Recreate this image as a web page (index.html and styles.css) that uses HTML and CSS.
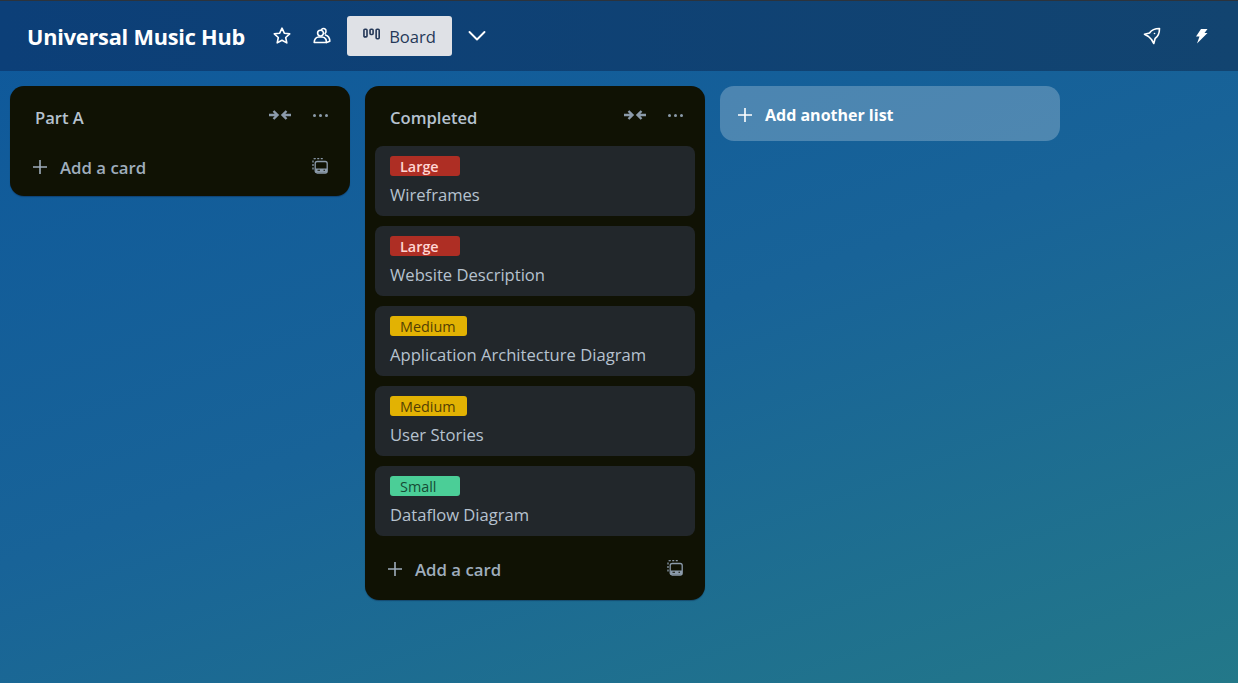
FILE: index.html
```html
<!DOCTYPE html>
<html lang="en">
<head>
    <meta charset="UTF-8">
    <title>Universal Music Hub</title>
    <link rel="stylesheet" href="styles.css">
</head>
<body>
    <header class="topbar">
        <h1 class="board-name">Universal Music Hub</h1>
        <svg class="icon star" viewBox="0 0 18 18"><path d="M9 1.200l2.300 5 5.400.6-4 3.700 1.100 5.400L9 13.200l-4.800 2.700 1.100-5.400-4-3.700 5.400-.6z"/></svg>
        <svg class="icon people" viewBox="0 0 18 18"><path d="M7.500 3.200a2.900 2.900 0 1 1 0 5.800 2.900 2.900 0 0 1 0-5.800z"/><path d="M1.200 15.500c0-3.200 2-5.500 4.500-5.500h3.500c1.800 0 3 1 3.800 2.500l.5 3z"/><path d="M8.500 2.500c2-2 5-.5 4.500 2.200-.1.800-.6 1.400-1 1.800M12.500 8c2.500.8 4.300 3.500 4.300 6.300l-3.300 1.200"/></svg>
        <button class="view-btn">
            <svg class="board-icon" viewBox="0 0 18 12"><rect x="1" y="1" width="3.200" height="8" rx="1"/><rect x="7.400" y="1" width="3.200" height="5.500" rx="1"/><rect x="13.800" y="1" width="3.200" height="10" rx="1"/></svg>
            Board
        </button>
        <svg class="icon chevron" viewBox="0 0 18 18"><path d="M1.500 5l7.500 7.500L16.500 5"/></svg>
        <div class="topbar-right">
            <svg class="icon rocket" viewBox="0 0 18 18"><path d="M16.500 1.500c-4.500 0-8 1.500-10 4.500L1.500 7.200l4 2.300 3 3 2.300 4 1.300-5c3-2 4.400-5.500 4.400-10z"/><circle class="rocket-eye" cx="11.500" cy="6.500" r=".8"/></svg>
            <svg class="icon bolt" viewBox="0 0 14 16"><path d="M7 1h6.500L10.500 5h3L3 15.500l2.500-7H2z"/></svg>
        </div>
    </header>

    <main class="board">
        <section class="list">
            <div class="list-head">
                <h2>Part A</h2>
                <svg class="head-icon" viewBox="0 0 24 12"><path d="M1 6h8M5.500 2L9.500 6l-4 4M23 6h-8M18.500 2L14.500 6l4 4"/></svg>
                <span class="dots"><i></i><i></i><i></i></span>
            </div>
            <div class="list-foot">
                <svg class="plus" viewBox="0 0 16 16"><path d="M8 1v14M1 8h14"/></svg>
                <span class="add-text">Add a card</span>
                <svg class="template" viewBox="0 0 16 16"><path class="dash" d="M1 11.500V2.500q0-1.800 1.800-1.800h8.700"/><rect x="3.200" y="3.500" width="12" height="11.500" rx="2"/><path class="fill" d="M3.500 10.500h11.500v4H3.500zM5.500 12.800h2.500v-1H5.500zM11.500 12.800h1.500v-1h-1.500z"/></svg>
            </div>
        </section>

        <section class="list">
            <div class="list-head">
                <h2>Completed</h2>
                <svg class="head-icon" viewBox="0 0 24 12"><path d="M1 6h8M5.500 2L9.500 6l-4 4M23 6h-8M18.500 2L14.500 6l4 4"/></svg>
                <span class="dots"><i></i><i></i><i></i></span>
            </div>
            <div class="cards">
                <article class="card"><span class="label large">Large</span><p>Wireframes</p></article>
                <article class="card"><span class="label large">Large</span><p>Website Description</p></article>
                <article class="card"><span class="label medium">Medium</span><p>Application Architecture Diagram</p></article>
                <article class="card"><span class="label medium">Medium</span><p>User Stories</p></article>
                <article class="card"><span class="label small">Small</span><p>Dataflow Diagram</p></article>
            </div>
            <div class="list-foot">
                <svg class="plus" viewBox="0 0 16 16"><path d="M8 1v14M1 8h14"/></svg>
                <span class="add-text">Add a card</span>
                <svg class="template" viewBox="0 0 16 16"><path class="dash" d="M1 11.500V2.500q0-1.800 1.800-1.800h8.700"/><rect x="3.200" y="3.500" width="12" height="11.500" rx="2"/><path class="fill" d="M3.500 10.500h11.500v4H3.500zM5.500 12.800h2.500v-1H5.500zM11.500 12.800h1.500v-1h-1.500z"/></svg>
            </div>
        </section>

        <button class="add-list">
            <svg class="plus" viewBox="0 0 16 16"><path d="M8 1v14M1 8h14"/></svg>
            Add another list
        </button>
    </main>
</body>
</html>
```

FILE: styles.css
```css
* {
    box-sizing: border-box;
}
html, body {
    height: 100%;
}
body {
    margin: 0;
    font-family: "Open Sans", "Noto Sans", Arial, sans-serif;
    background: linear-gradient(160deg, #0e589b 0%, #186398 50%, #237889 100%);
    overflow: hidden;
}
.topbar {
    display: flex;
    align-items: center;
    height: 71px;
    padding: 0 28px 0 27px;
    border-top: 1px solid #2c333c;
    background: linear-gradient(90deg, #0c3f78, #124470);
    color: #fff;
}
.board-name {
    width: 218px;
    margin: 0;
    font-size: 21.700px;
    font-weight: 700;
    letter-spacing: -0.2px;
    white-space: nowrap;
}
.icon {
    width: 18px;
    height: 18px;
    fill: none;
    stroke: #fff;
    stroke-width: 1.600;
    stroke-linejoin: round;
    stroke-linecap: round;
}
.star {
    margin-left: 28px;
}
.people {
    margin-left: 22px;
}
.view-btn {
    display: flex;
    align-items: center;
    gap: 9px;
    width: 105px;
    height: 40px;
    margin-left: 16px;
    padding: 0 16px;
    border: none;
    border-radius: 3px;
    background: #dfe1e6;
    color: #253858;
    font-family: inherit;
    font-size: 16.600px;
}
.board-icon {
    width: 18px;
    height: 12px;
    margin-top: -4px;
    fill: none;
    stroke: #253858;
    stroke-width: 1.700;
}
.chevron {
    margin-left: 16px;
    stroke-width: 1.900;
}
.topbar-right {
    display: flex;
    align-items: center;
    gap: 33px;
    margin-left: auto;
    padding-right: 2px;
}
.rocket-eye {
    fill: #fff;
    stroke: none;
}
.bolt {
    width: 14px;
    height: 16px;
    fill: #fff;
    stroke: none;
}
.board {
    display: flex;
    align-items: flex-start;
    gap: 15px;
    padding: 15px 10px;
}
.list {
    width: 340px;
    border-radius: 14px;
    background: #101204;
    box-shadow: 0 1px 1px rgba(9, 30, 66, 0.4);
}
.list-head {
    display: flex;
    align-items: center;
    height: 60px;
    padding: 2px 22px 0 25px;
}
.list-head h2 {
    flex: 1;
    margin: 0;
    color: #b6c2cf;
    font-size: 16.600px;
    font-weight: 600;
}
.head-icon {
    width: 24px;
    height: 12px;
    margin-right: 21px;
    margin-top: -4px;
    fill: none;
    stroke: #8c9bab;
    stroke-width: 2.400;
}
.dots {
    display: flex;
    gap: 3px;
    margin-top: -4px;
}
.dots i {
    width: 3px;
    height: 3px;
    border-radius: 50%;
    background: #8c9bab;
}
.cards {
    display: flex;
    flex-direction: column;
    gap: 10px;
    margin: 0 10px 12px 10px;
}
.card {
    height: 70px;
    padding: 10px 15px;
    border-radius: 8px;
    background: #22272b;
}
.label {
    display: block;
    width: 70px;
    height: 20px;
    padding-left: 10px;
    border-radius: 3px;
    font-size: 14.400px;
    line-height: 21px;
}
.label.large {
    background: #ae2e24;
    color: #ffd5d2;
    font-weight: 600;
}
.label.medium {
    width: 77px;
    background: #e2b203;
    color: #533f04;
}
.label.small {
    background: #4bce97;
    color: #164b35;
}
.card p {
    margin: 8px 0 0;
    color: #b6c2cf;
    font-size: 16.600px;
    line-height: 22px;
}
.list-foot {
    display: flex;
    align-items: center;
    height: 50px;
    padding: 0 22px 8px 22px;
}
.cards + .list-foot {
    height: 52px;
    padding-bottom: 10px;
}
.plus {
    width: 16px;
    height: 16px;
    margin-top: -1px;
    fill: none;
    stroke: #9fadbc;
    stroke-width: 1.600;
}
.add-text {
    flex: 1;
    margin-left: 12px;
    color: #9fadbc;
    font-size: 16.800px;
    font-weight: 600;
}
.template {
    width: 16px;
    height: 16px;
    margin-top: -3px;
    fill: none;
    stroke: #8c9bab;
    stroke-width: 1.300;
}
.template .dash {
    stroke-dasharray: 2 1.500;
}
.template .fill {
    fill: #8c9bab;
    fill-rule: evenodd;
    stroke: none;
}
.add-list {
    display: flex;
    align-items: center;
    gap: 12px;
    width: 340px;
    height: 55px;
    padding: 2px 17px 0;
    border: none;
    border-radius: 14px;
    background: rgba(255, 255, 255, 0.24);
    color: #fff;
    font-family: inherit;
    font-size: 16px;
    font-weight: 700;
}
.add-list .plus {
    margin-top: 0;
    stroke: #fff;
}
```
